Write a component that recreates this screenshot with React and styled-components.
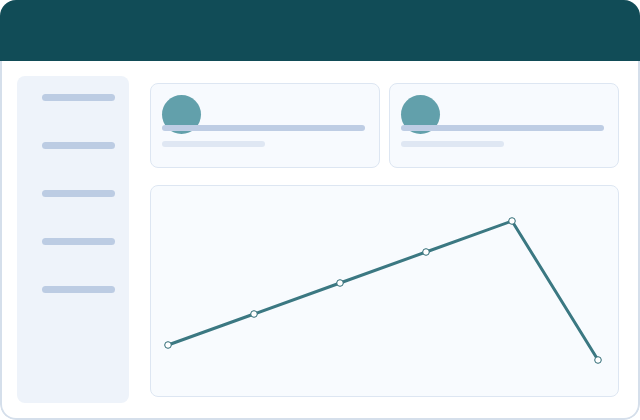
import React from "react";
import styled, { createGlobalStyle } from "styled-components";

const Global = createGlobalStyle`
  html, body { margin: 0; padding: 0; background: #ffffff; }
  body { font-family: "Liberation Sans", Arial, sans-serif; }
  * { box-sizing: border-box; }
`;

const Frame = styled.div`
  width: 640px;
  height: 420px;
  display: flex;
  flex-direction: column;
  border-radius: 16px;
  overflow: hidden;
  background: #ffffff;
`;

const Header = styled.header`
  height: 61px;
  flex: none;
  background: #114c57;
`;

const Body = styled.div`
  flex: 1;
  min-height: 0;
  display: flex;
  gap: 21px;
  padding: 15px 19px 15px 15px;
  border: 2px solid #d5dfeb;
  border-top: none;
  border-radius: 0 0 16px 16px;
`;

const Sidebar = styled.nav`
  width: 112px;
  flex: none;
  display: flex;
  flex-direction: column;
  gap: 41px;
  padding: 18px 14px 0 25px;
  background: #eef3fa;
  border-radius: 8px;
`;

const NavLine = styled.div`
  height: 7px;
  border-radius: 4px;
  background: #bccce3;
`;

const Main = styled.main`
  flex: 1;
  min-height: 0;
  display: flex;
  flex-direction: column;
  gap: 17px;
  padding: 7px 0 6px;
`;

const CardRow = styled.div`
  display: grid;
  grid-template-columns: 1fr 1fr;
  gap: 9px;
`;

const Card = styled.div`
  height: 85px;
  display: flex;
  flex-direction: column;
  padding: 11px 14px 0 11px;
  background: #f7fafe;
  border: 1px solid #dde6f2;
  border-radius: 8px;
`;

const Avatar = styled.div`
  width: 39px;
  height: 39px;
  border-radius: 50%;
  background: #62a0ab;
`;

const Bar = styled.div`
  position: relative;
  height: 6px;
  border-radius: 3px;
  width: ${(p) => p.$width};
  margin-top: ${(p) => p.$top}px;
  background: ${(p) => p.$color};
`;

const ChartCard = styled.div`
  flex: 1;
  min-height: 0;
  background: #f8fbfe;
  border: 1px solid #dde6f2;
  border-radius: 8px;
  overflow: hidden;

  svg {
    display: block;
    width: 100%;
    height: 100%;
  }
`;

const points = [
  [17, 159],
  [103, 128],
  [189, 97],
  [275, 66],
  [361, 35],
  [447, 174],
];

function StatCard() {
  return (
    <Card>
      <Avatar />
      <Bar $width="100%" $top={-9} $color="#becde4" />
      <Bar $width="103px" $top={10} $color="#dfe7f3" />
    </Card>
  );
}

export default function App() {
  const path = points.map(([x, y], i) => `${i ? "L" : "M"}${x} ${y}`).join(" ");
  return (
    <>
      <Global />
      <Frame>
        <Header />
        <Body>
          <Sidebar>
            <NavLine />
            <NavLine />
            <NavLine />
            <NavLine />
            <NavLine />
          </Sidebar>
          <Main>
            <CardRow>
              <StatCard />
              <StatCard />
            </CardRow>
            <ChartCard>
              <svg viewBox="0 0 467 210">
                <path d={path} fill="none" stroke="#3b7882" strokeWidth="3" strokeLinejoin="round" />
                {points.map(([x, y], i) => (
                  <circle key={i} cx={x} cy={y} r="3.3" fill="#ffffff" stroke="#2f6b75" strokeWidth="1" />
                ))}
              </svg>
            </ChartCard>
          </Main>
        </Body>
      </Frame>
    </>
  );
}
